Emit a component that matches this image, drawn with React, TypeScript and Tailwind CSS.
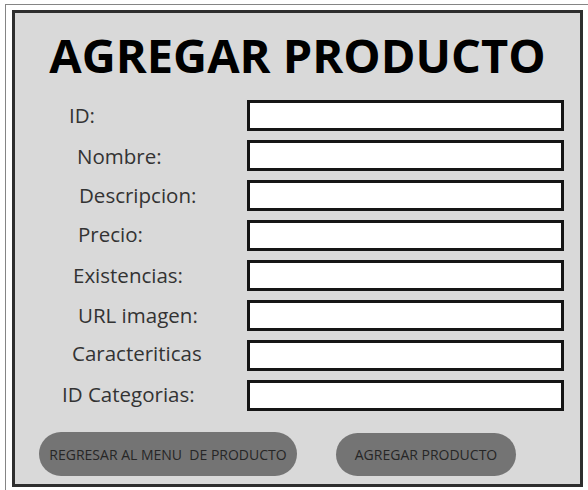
import React from "react";

const fields: { label: string; pl: string; dy: string }[] = [
  { label: "ID:", pl: "pl-[54px]", dy: "" },
  { label: "Nombre:", pl: "pl-[62px]", dy: "translate-y-[1px]" },
  { label: "Descripcion:", pl: "pl-[64px]", dy: "" },
  { label: "Precio:", pl: "pl-[63px]", dy: "-translate-y-[1px]" },
  { label: "Existencias:", pl: "pl-[58px]", dy: "" },
  { label: "URL imagen:", pl: "pl-[63px]", dy: "" },
  { label: "Caracteriticas", pl: "pl-[57px]", dy: "-translate-y-[2px]" },
  { label: "ID Categorias:", pl: "pl-[47px]", dy: "-translate-y-[1px]" },
];

export default function App() {
  return (
    <div
      className="w-[588px] h-[490px] bg-white pl-[5px] pt-[4px]"
      style={{ fontFamily: "'Open Sans', 'Noto Sans', sans-serif" }}
    >
      <div className="h-full border-l border-t border-[#858585] pl-[6px] pt-[5px]">
        <div className="w-[571px] h-[477px] bg-[#d9d9d9] border-[3px] border-[#2e2e2e] pt-[19px] flex flex-col">
          <h1 className="text-[47px] leading-[47px] font-bold text-center text-black">
            AGREGAR PRODUCTO
          </h1>
          <div className="mt-[21px] grid grid-cols-[232px_317px] gap-y-[9px]">
            {fields.map((f) => (
              <React.Fragment key={f.label}>
                <div className={`h-[31px] flex items-center ${f.pl}`}>
                  <span className={`text-[20.5px] leading-none text-[#333333] ${f.dy}`}>
                    {f.label}
                  </span>
                </div>
                <div className="h-[31px] bg-white border-[3px] border-[#151515]" />
              </React.Fragment>
            ))}
          </div>
          <div className="mt-[21px] flex items-start pl-[24px] gap-[39px]">
            <button className="w-[258px] h-[44px] rounded-full bg-[#747474] text-[14px] text-[#262626] whitespace-pre flex items-center justify-center">
              {"REGRESAR AL MENU  DE PRODUCTO"}
            </button>
            <button className="mt-[1px] w-[180px] h-[43px] rounded-full bg-[#747474] text-[14px] text-[#262626] flex items-center justify-center">
              AGREGAR PRODUCTO
            </button>
          </div>
        </div>
      </div>
    </div>
  );
}
